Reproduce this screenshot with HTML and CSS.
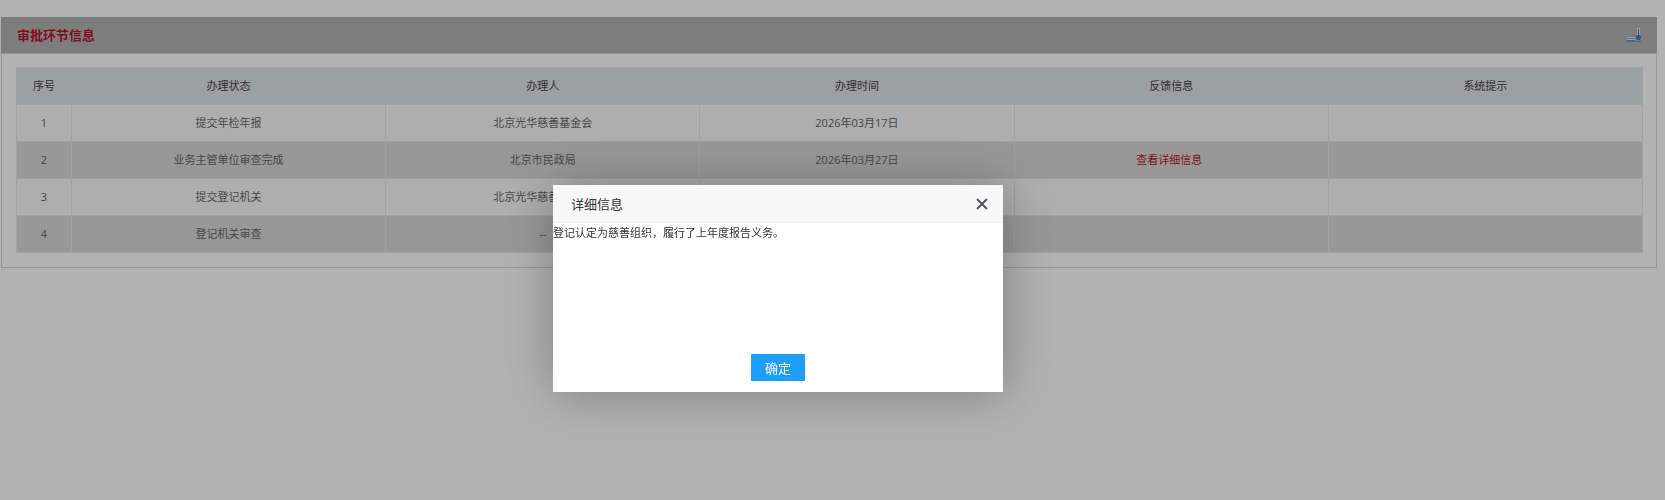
FILE: index.html
```
<!DOCTYPE html>
<html lang="zh-CN">
<head>
    <meta charset="UTF-8">
    <meta name="viewport" content="width=device-width, initial-scale=1.0">
    <title>审批环节信息</title>
    <link rel="stylesheet" href="styles.css">
</head>
<body>
    <div class="panel">
        <div class="panel-head">
            <h3>审批环节信息</h3>
            <button class="toggle" type="button" aria-label="收起">
                <svg width="15" height="15" viewBox="0 0 15 15" shape-rendering="crispEdges">
                    <path d="M10 0h3v8h-3z" fill="#d5dde8"/>
                    <path d="M11 1h1v8h-1z" fill="#4f92e4"/>
                    <path d="M0 9h8v4H0z" fill="#dfe5ec"/>
                    <path d="M0 10h8v1H0z" fill="#86a3c4"/>
                    <path d="M0 12h8v1H0z" fill="#5f93d2"/>
                    <path d="M0 13h15v1H0z" fill="#6f9bd0"/>
                    <path d="M9 8h5v3H9zM10 7h3v5h-3z" fill="#3c7ed6"/>
                </svg>
            </button>
        </div>
        <div class="panel-body">
            <table class="list">
                <thead>
                    <tr>
                        <th class="num">序号</th>
                        <th>办理状态</th>
                        <th>办理人</th>
                        <th>办理时间</th>
                        <th>反馈信息</th>
                        <th>系统提示</th>
                    </tr>
                </thead>
                <tbody>
                    <tr>
                        <td>1</td>
                        <td>提交年检年报</td>
                        <td>北京光华慈善基金会</td>
                        <td>2026年03月17日</td>
                        <td></td>
                        <td></td>
                    </tr>
                    <tr>
                        <td>2</td>
                        <td>业务主管单位审查完成</td>
                        <td>北京市民政局</td>
                        <td>2026年03月27日</td>
                        <td><a href="#">查看详细信息</a></td>
                        <td></td>
                    </tr>
                    <tr>
                        <td>3</td>
                        <td>提交登记机关</td>
                        <td>北京光华慈善基金会</td>
                        <td></td>
                        <td></td>
                        <td></td>
                    </tr>
                    <tr>
                        <td>4</td>
                        <td>登记机关审查</td>
                        <td>--</td>
                        <td></td>
                        <td></td>
                        <td></td>
                    </tr>
                </tbody>
            </table>
        </div>
    </div>

    <div class="shade"></div>
    <div class="layer" role="dialog" aria-labelledby="layerTitle">
        <div class="layer-title">
            <span id="layerTitle">详细信息</span>
            <button class="layer-close" type="button" aria-label="关闭">
                <svg width="12" height="12" viewBox="0 0 12 12">
                    <path d="M1 1l10 10M11 1L1 11" fill="none" stroke="#53515d" stroke-width="2"/>
                </svg>
            </button>
        </div>
        <div class="layer-content">登记认定为慈善组织，履行了上年度报告义务。</div>
        <div class="layer-btn">
            <button class="btn" type="button">确定</button>
        </div>
    </div>
</body>
</html>
```
FILE: styles.css
```
* {
    box-sizing: border-box;
}
body {
    margin: 0;
    padding: 17px 8px 0 1px;
    background: #fff;
    color: #666;
    font: 11px/18px "Open Sans", "Noto Sans CJK SC", sans-serif;
}
button {
    padding: 0;
    border: none;
    background: none;
    font-family: inherit;
    cursor: pointer;
}
svg {
    display: block;
}
.panel {
    border: 1px solid #d6d6d6;
    border-top: none;
}
.panel-head {
    display: flex;
    align-items: center;
    justify-content: space-between;
    height: 37px;
    margin: 0 -1px;
    padding: 0 15px 0 16px;
    background: #b4b4b4;
    border-bottom: 1px solid #d6d6d6;
}
.panel-head h3 {
    margin: 0;
    color: #c01030;
    font-size: 13px;
    font-weight: bold;
}
.panel-body {
    padding: 13px 13px 14px 14px;
}
.list {
    width: 100%;
    border-collapse: collapse;
    table-layout: fixed;
}
.list th,
.list td {
    height: 37px;
    padding: 0;
    border: 1px solid #e7e7e7;
    text-align: center;
    font-weight: normal;
}
.list th {
    background: #dfe5e8;
    color: #444;
}
.list .num {
    width: 55px;
}
.list tbody tr {
    background: #f9f9f9;
}
.list tbody tr:nth-child(even) {
    background: #dadada;
}
.list a {
    margin-right: 4px;
    color: #c01030;
    text-decoration: none;
}

/* popup */
.shade {
    position: fixed;
    inset: 0;
    background: rgba(0,0,0,0.3);
}
.layer {
    position: fixed;
    top: 185px;
    left: 553px;
    display: flex;
    flex-direction: column;
    width: 450px;
    background: #fff;
    box-shadow: 1px 1px 50px rgba(0,0,0,0.3);
    color: #333;
}
.layer-title {
    display: flex;
    align-items: center;
    justify-content: space-between;
    height: 38px;
    padding: 0 15px 0 18px;
    background: #f8f8f8;
    border-bottom: 1px solid #eee;
    font-size: 13px;
}
.layer-content {
    min-height: 120px;
    line-height: 20px;
}
.layer-btn {
    padding: 11px;
    text-align: center;
}
.btn {
    height: 27px;
    padding: 0 14px;
    background: #1e9fff;
    color: #fff;
    font-size: 13px;
    vertical-align: top;
}
```
